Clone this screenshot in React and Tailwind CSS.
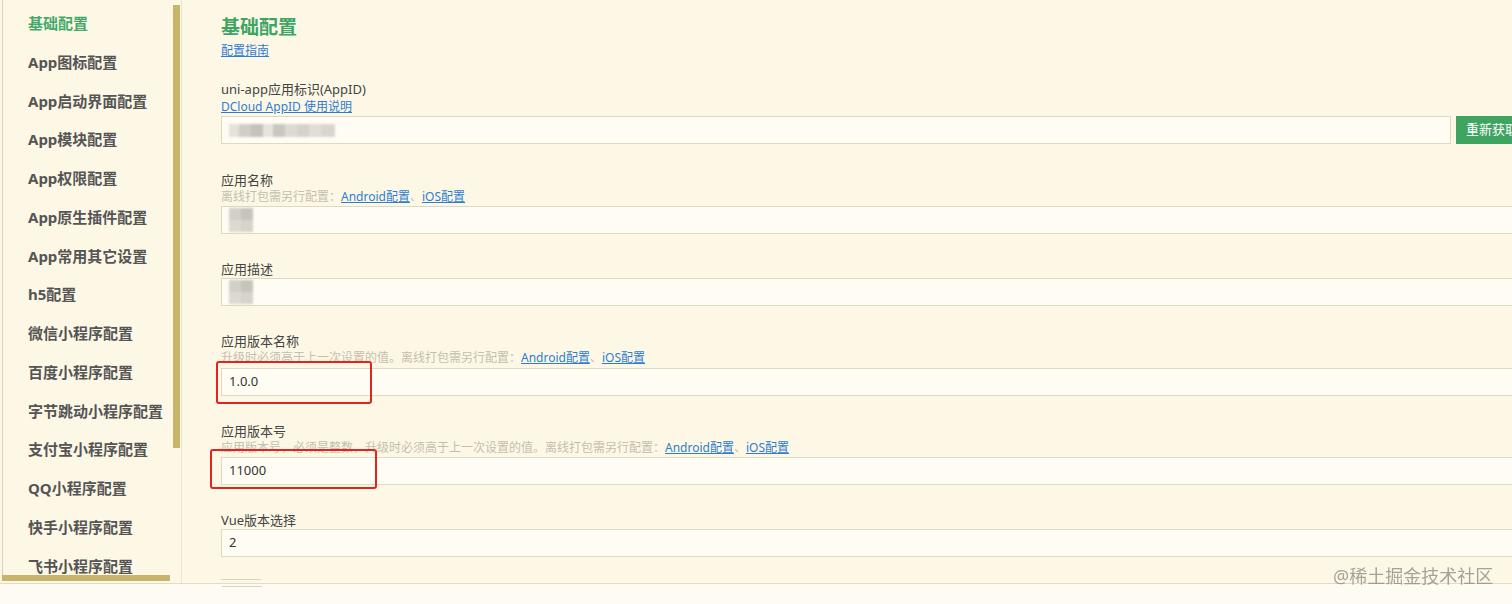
import React from "react";

const navItems = [
  "基础配置",
  "App图标配置",
  "App启动界面配置",
  "App模块配置",
  "App权限配置",
  "App原生插件配置",
  "App常用其它设置",
  "h5配置",
  "微信小程序配置",
  "百度小程序配置",
  "字节跳动小程序配置",
  "支付宝小程序配置",
  "QQ小程序配置",
  "快手小程序配置",
  "飞书小程序配置",
];

function Links() {
  return (
    <>
      <a className="text-[#2d7dd2] underline">Android配置</a>
      <span className="text-[#c3bfae]">、</span>
      <a className="text-[#2d7dd2] underline">iOS配置</a>
    </>
  );
}

function Label({ children }) {
  return <div className="text-[13px] leading-[18px] text-[#444]">{children}</div>;
}

function Hint({ children }) {
  return <div className="text-[12px] leading-[16px] text-[#c3bfae]">{children}</div>;
}

function Input({ children, className = "" }) {
  return (
    <div
      className={
        "h-[28px] border border-[#dfdabf] bg-[#fffdf3] px-[7px] flex items-center text-[13px] text-[#333] " +
        className
      }
    >
      {children}
    </div>
  );
}

function BlurSquares() {
  return (
    <div className="grid grid-cols-2 blur-[1px]">
      <div className="w-[12px] h-[12px] bg-[#d2d0c8]" />
      <div className="w-[12px] h-[12px] bg-[#c6c4bb]" />
      <div className="w-[12px] h-[12px] bg-[#dcdad0]" />
      <div className="w-[12px] h-[12px] bg-[#d5d3ca]" />
    </div>
  );
}

export default function App() {
  return (
    <div className="relative w-[1512px] h-[604px] overflow-hidden bg-[#fefcf2] font-['Noto_Sans','Noto_Sans_CJK_SC',sans-serif]">
      <div className="flex h-[584px] border-b border-[#e2dcc0] bg-[#fdf8e6]">
        {/* Sidebar */}
        <aside className="flex flex-col w-[182px] shrink-0 border-r border-[#ece6cd] pl-[2px]">
          <div className="flex flex-1 min-h-0 border-l border-[#d8d3bf]">
            <ul className="flex-1 overflow-hidden pt-[4px] pl-[25px]">
              {navItems.map((item, i) => (
                <li
                  key={item}
                  className={
                    "h-[38.75px] flex items-center text-[15px] font-bold whitespace-nowrap " +
                    (i === 0 ? "text-[#45a96b]" : "text-[#555]")
                  }
                >
                  {item}
                </li>
              ))}
            </ul>
            <div className="w-[8px] pt-[5px] pr-[1px]">
              <div className="h-[443px] bg-[#c9b46c]" />
            </div>
          </div>
          <div className="h-[8px]">
            <div className="w-[168px] h-[6px] bg-[#c9b46c]" />
          </div>
        </aside>

        {/* Content */}
        <main className="flex-1 min-w-0 overflow-hidden pl-[39px] pt-[15px]">
          <div className="w-[1310px]">
            <h1 className="text-[19px] leading-[24px] font-bold text-[#3da564]">基础配置</h1>
            <a className="block mt-[4px] text-[12px] leading-[16px] text-[#2d7dd2] underline">配置指南</a>

            <div className="mt-[21px]">
              <Label>uni-app应用标识(AppID)</Label>
              <a className="block text-[12px] leading-[17px] text-[#2d7dd2] underline">DCloud AppID 使用说明</a>
              <div className="mt-[1px] flex">
                <Input className="flex-1 bg-[#f6f5ef]">
                  <div className="flex blur-[1px] h-[13px]">
                    <div className="w-[10px] bg-[#e4e2db]" />
                    <div className="w-[12px] bg-[#cfcdc6]" />
                    <div className="w-[12px] bg-[#c4c2bb]" />
                    <div className="w-[10px] bg-[#e6e4dd]" />
                    <div className="w-[12px] bg-[#c9c7c0]" />
                    <div className="w-[12px] bg-[#dcdad3]" />
                    <div className="w-[12px] bg-[#d4d2cb]" />
                    <div className="w-[12px] bg-[#e0ded7]" />
                    <div className="w-[14px] bg-[#d8d6cf]" />
                  </div>
                </Input>
                <button className="ml-[5px] w-[75px] shrink-0 h-[28px] bg-[#3fa45f] text-white text-[13px] text-left pl-[10px] whitespace-nowrap">
                  重新获取
                </button>
              </div>
            </div>

            <div className="mt-[27px]">
              <Label>应用名称</Label>
              <Hint>
                离线打包需另行配置：<Links />
              </Hint>
              <Input className="mt-[1px]">
                <BlurSquares />
              </Input>
            </div>

            <div className="mt-[26px]">
              <Label>应用描述</Label>
              <Input>
                <BlurSquares />
              </Input>
            </div>

            <div className="mt-[26px]">
              <Label>应用版本名称</Label>
              <Hint>
                升级时必须高于上一次设置的值。离线打包需另行配置：<Links />
              </Hint>
              <Input className="mt-[2px]">1.0.0</Input>
            </div>

            <div className="mt-[26px]">
              <Label>应用版本号</Label>
              <Hint>
                应用版本号，必须是整数，升级时必须高于上一次设置的值。离线打包需另行配置：<Links />
              </Hint>
              <Input className="mt-[1px]">11000</Input>
            </div>

            <div className="mt-[26px]">
              <Label>Vue版本选择</Label>
              <Input>2</Input>
            </div>

            <div className="mt-[22px] w-[40px] border-t border-[#d8d3bf]" />
          </div>
        </main>
      </div>

      {/* bottom strip */}
      <div className="pl-[222px] pt-[2px]">
        <div className="w-[40px] border-t border-[#d8d3bf]" />
      </div>

      {/* annotation boxes */}
      <div className="absolute left-[216px] top-[361px] w-[156px] h-[43px] border-2 border-[#e2231e] rounded-[3px]" />
      <div className="absolute left-[210px] top-[449px] w-[167px] h-[40px] border-2 border-[#e2231e] rounded-[3px]" />

      {/* watermark */}
      <div className="absolute left-[1333px] top-[563px] text-[18px] leading-[26px] text-[#8f8d86] opacity-80 whitespace-nowrap">
        @稀土掘金技术社区
      </div>
    </div>
  );
}
